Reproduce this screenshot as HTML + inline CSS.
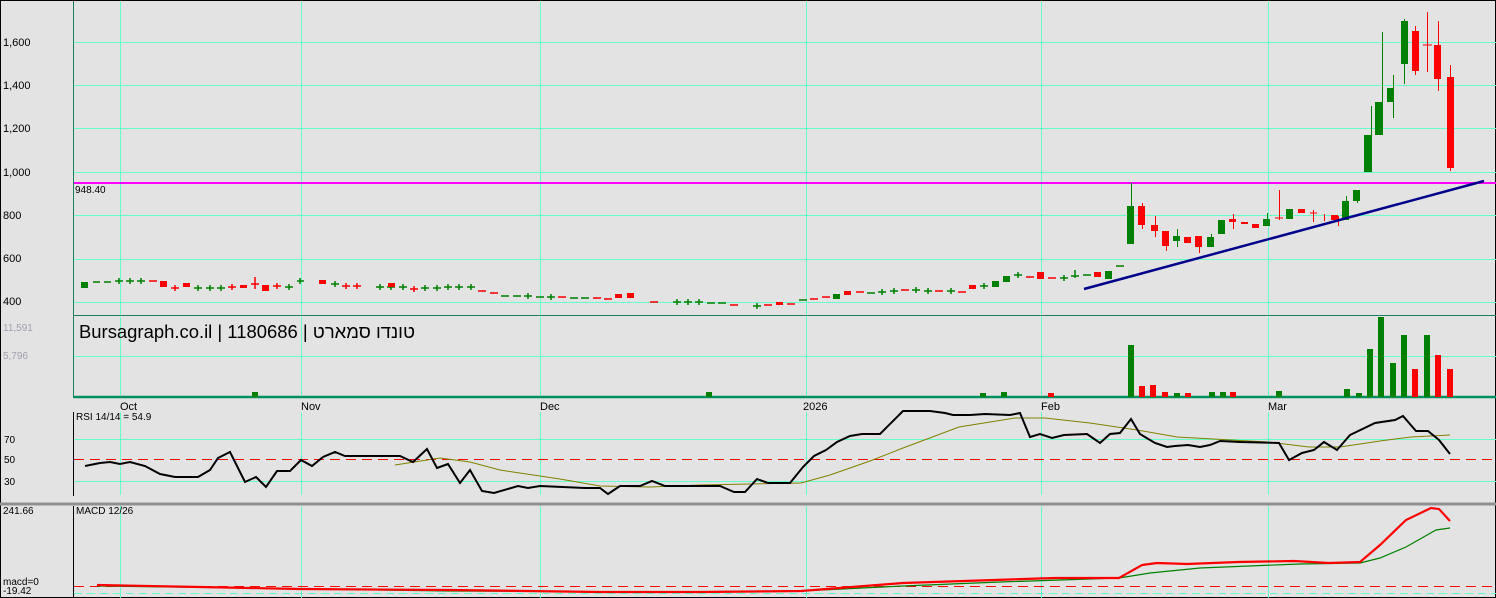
<!DOCTYPE html>
<html><head><meta charset="utf-8"><style>
body{margin:0;background:#e3e3e3;width:1496px;height:598px;overflow:hidden}
svg{display:block}
text{font-family:"Liberation Sans","Noto Sans CJK SC",sans-serif;font-size:11px;fill:#000}
</style></head><body>
<svg width="1496" height="598" viewBox="0 0 1496 598" xmlns="http://www.w3.org/2000/svg">
<rect x="0" y="0" width="1496" height="598" fill="#e3e3e3"/>
<rect x="0.5" y="0.5" width="1495" height="597" fill="none" stroke="#000"/>
<g stroke="#66ffcc" stroke-width="1" fill="none">
<path d="M74 42.5H1496M74 85.5H1496M74 128.5H1496M74 172.5H1496M74 215.5H1496M74 259.5H1496M74 302.5H1496"/>
<path d="M74 356.5H1496M74 439.5H1496M74 481.5H1496"/>
<path d="M120.5 1V315M301.5 1V315M540.5 1V315M806.5 1V315M1041.5 1V315M1268.5 1V315"/>
<path d="M120.5 316V396M301.5 316V396M540.5 316V396M806.5 316V396M1041.5 316V396M1268.5 316V396"/>
<path d="M120.5 412V495M301.5 412V495M540.5 412V495M806.5 412V495M1041.5 412V495M1268.5 412V495"/>
<path d="M120.5 506V598M301.5 506V598M540.5 506V598M806.5 506V598M1041.5 506V598M1268.5 506V598"/>
<path d="M74 593.5H1496" stroke-dasharray="8 5"/>
</g>
<path d="M73.5 1V398" stroke="#1a8060" stroke-width="1"/>
<path d="M74 315.5H1496" stroke="#1a8060"/>
<path d="M74 397H1496" stroke="#009060" stroke-width="2.5"/>
<path d="M73.5 412V496M73.5 506V598" stroke="#000"/>
<path d="M0 504H1496" stroke="#909090" stroke-width="3"/>
<path d="M74 459.5H1496M74 586.5H1496" stroke="#ff0000" stroke-dasharray="10 6"/>
<path d="M74 183H1496" stroke="#ff00ff" stroke-width="2"/>
<text x="3" y="46">1,600</text><text x="3" y="89">1,400</text><text x="3" y="132">1,200</text><text x="3" y="176">1,000</text>
<text x="3" y="219">800</text><text x="3" y="262">600</text><text x="3" y="305">400</text>
<text x="75" y="193" style="font-size:10px">948.40</text>
<text x="3" y="331" style="font-size:10px;fill:#a0a0b0">11,591</text>
<text x="3" y="359" style="font-size:10px;fill:#a0a0b0">5,796</text>
<text x="79" y="338" style="font-size:18.5px" textLength="336" lengthAdjust="spacingAndGlyphs">Bursagraph.co.il | 1180686 | טונדו סמארט</text>
<text x="120" y="410">Oct</text><text x="301" y="410">Nov</text><text x="540" y="410">Dec</text><text x="803" y="410">2026</text><text x="1041" y="410">Feb</text><text x="1268" y="410">Mar</text>
<text x="76" y="420" style="font-size:10px">RSI 14/14 = 54.9</text>
<text x="4" y="443" style="font-size:10px">70</text><text x="4" y="463" style="font-size:10px">50</text><text x="4" y="485" style="font-size:10px">30</text>
<text x="3" y="514" style="font-size:10px">241.66</text>
<text x="76" y="514" style="font-size:10px">MACD 12/26</text>
<text x="3" y="585" style="font-size:10px">macd=0</text><text x="3" y="594" style="font-size:10px">-19.42</text>
<g stroke-width="1.5" fill="none">
<path stroke="#008000" d="M93 282h7M104 282h7M115 281h8M119 278v6M126 281h8M130 278v6M137 281h8M141 278v6M194 288h8M198 285v6M206 288h8M210 285v6M217 288h8M221 285v6M285 287h8M289 284v6M297 281h7M300 278v6M331 284h8M335 281v6M376 287h8M380 284v6M387 287h8M391 284v6M399 287h8M403 284v6M421 288h8M425 285v6M433 288h8M437 285v6M444 287h8M448 284v6M455 287h8M459 284v6M467 287h8M471 284v6M501 296h8M513 296h8M524 296h8M528 293v6M536 297h8M547 297h8M551 294v6M570 298h8M581 298h8M673 302h8M677 299v6M684 302h8M688 299v6M695 302h8M699 299v6M707 303h8M718 303h8M753 306h8M757 303v6M799 300h8M867 293h8M878 292h8M882 289v6M890 291h8M894 288v6M912 290h8M916 287v6M924 291h8M928 288v6M947 291h8M951 288v6M980 286h8M984 283v6M1014 275h8M1018 272v6M1060 278h8M1064 275v6M1071 276h8M1075 270v8M1083 275h8M1116 266h8"/>
<path stroke="#ff0000" d="M149 281h8M171 288h8M175 285v6M228 287h8M232 284v6M251 284h8M255 277v12M273 286h8M277 283v6M342 286h8M346 283v6M353 286h8M357 283v6M410 289h8M414 286v6M478 291h8M490 293h8M558 297h8M593 298h8M604 299h8M650 302h8M730 305h8M764 305h8M787 304h8M810 299h8M822 297h8M856 292h8M901 290h8M935 291h8M958 292h8M1026 277h8M1048 278h8"/>
</g>
<g fill="#008000">
<rect x="81" y="282" width="7" height="6"/>
<rect x="833" y="294" width="7" height="5"/><rect x="992" y="281" width="7" height="6"/><rect x="1003" y="276" width="7" height="6"/><rect x="1105" y="271" width="7" height="8"/>
<rect x="1127" y="206" width="7" height="38"/><rect x="1173" y="236" width="7" height="5"/><rect x="1207" y="237" width="7" height="10"/><rect x="1218" y="220" width="7" height="14"/><rect x="1263" y="219" width="7" height="7"/><rect x="1286" y="209" width="7" height="10"/><rect x="1342" y="201" width="7" height="19"/><rect x="1353" y="190" width="7" height="11"/><rect x="1364" y="135" width="7" height="37"/><rect x="1375" y="102" width="7" height="33"/><rect x="1387" y="88" width="7" height="14"/><rect x="1401" y="21" width="7" height="43"/>
</g>
<g fill="#ff0000">
<rect x="160" y="281" width="7" height="6"/><rect x="183" y="283" width="7" height="4"/><rect x="240" y="285" width="7" height="3"/><rect x="262" y="285" width="7" height="6"/><rect x="319" y="280" width="7" height="4"/><rect x="388" y="283" width="7" height="4"/><rect x="615" y="294" width="7" height="4"/><rect x="627" y="293" width="7" height="5"/><rect x="776" y="302" width="7" height="3"/><rect x="844" y="291" width="7" height="4"/><rect x="969" y="285" width="7" height="4"/><rect x="1037" y="272" width="7" height="7"/><rect x="1094" y="272" width="7" height="5"/>
<rect x="1138" y="206" width="7" height="19"/><rect x="1151" y="225" width="7" height="6"/><rect x="1162" y="231" width="7" height="15"/><rect x="1184" y="237" width="7" height="6"/><rect x="1195" y="236" width="7" height="11"/><rect x="1229" y="219" width="7" height="3"/><rect x="1241" y="222" width="7" height="2"/><rect x="1252" y="224" width="7" height="4"/><rect x="1298" y="209" width="7" height="4"/><rect x="1331" y="215" width="7" height="5"/><rect x="1412" y="31" width="7" height="40"/><rect x="1434" y="45" width="7" height="34"/><rect x="1447" y="77" width="7" height="91"/>
</g>
<g stroke-width="1" fill="none">
<path stroke="#008000" d="M1131.5 183V244M1177.5 229V247M1211.5 234V247M1267.5 213V226M1346.5 196V220M1357.5 190V203M1371.5 106V172M1382.5 32V135M1393.5 75V118M1404.5 19V84"/>
<path stroke="#ff0000" d="M1142.5 203V229M1155.5 216V237M1166.5 231V251M1199.5 236V253M1233.5 214V229M1279.5 190V220M1275 218h8M1313.5 210V222M1310 213h7M1324.5 214V221M1338.5 216V226M1415.5 26V75M1427.5 12V72M1423 45h9M1438.5 21V91M1450.5 65V171"/>
</g>
<path d="M1084 289L1484 181" stroke="#00008b" stroke-width="2.5"/>
<g fill="#008000">
<rect x="252" y="392" width="6" height="5"/><rect x="706" y="392" width="6" height="5"/><rect x="980" y="393" width="6" height="4"/><rect x="1001" y="392" width="6" height="5"/><rect x="1128" y="345" width="6" height="52"/><rect x="1174" y="393" width="6" height="4"/><rect x="1209" y="392" width="6" height="5"/><rect x="1220" y="392" width="6" height="5"/><rect x="1276" y="391" width="6" height="6"/><rect x="1344" y="389" width="6" height="8"/><rect x="1356" y="393" width="6" height="4"/><rect x="1367" y="349" width="6" height="48"/><rect x="1378" y="317" width="6" height="80"/><rect x="1390" y="363" width="6" height="34"/><rect x="1401" y="335" width="6" height="62"/><rect x="1424" y="335" width="6" height="62"/>
</g>
<g fill="#ff0000">
<rect x="1048" y="393" width="6" height="4"/><rect x="1139" y="386" width="6" height="11"/><rect x="1150" y="385" width="6" height="12"/><rect x="1162" y="392" width="6" height="5"/><rect x="1185" y="393" width="6" height="4"/><rect x="1230" y="392" width="6" height="5"/><rect x="1412" y="369" width="6" height="28"/><rect x="1435" y="355" width="6" height="42"/><rect x="1447" y="369" width="6" height="28"/>
</g>
<polyline fill="none" stroke="#808000" stroke-width="1" points="395,465 440,458 470,462 500,470 560,479 600,486 650,487 700,485 750,484 801,483 830,475 870,461 903,448 959,427 1015,418 1045,418 1090,423 1137,430 1177,437 1268,442 1309,447 1340,447 1380,441 1411,437 1450,435"/>
<polyline fill="none" stroke="#000" stroke-width="2" points="85,466 100,463 110,462 120,464 130,462 145,466 160,474 175,477 198,477 210,470 218,458 230,452 245,482 256,477 266,487 277,471 290,471 301,460 312,466 323,457 335,452 345,456 355,456 400,456 413,462 427,449 437,468 448,464 460,483 470,470 482,491 494,493 518,486 528,488 540,486 585,488 600,488 608,494 620,486 640,486 652,481 665,486 700,486 720,486 734,492 745,492 757,479 768,483 790,483 803,467 814,456 826,450 837,442 850,436 862,434 880,434 903,411 930,411 945,413 953,415 970,415 985,414 1010,415 1020,413 1030,437 1040,434 1052,438 1064,435 1087,434 1100,443 1110,434 1120,433 1131,419 1140,434 1155,443 1167,447 1175,446 1188,445 1200,447 1210,445 1220,441 1240,442 1279,443 1289,460 1302,453 1314,450 1324,442 1337,450 1350,435 1375,423 1395,420 1403,416 1416,431 1428,431 1439,440 1450,454"/>
<polyline fill="none" stroke="#008000" stroke-width="1.2" points="97,586 250,588 450,591 650,592 801,591 903,586 1000,582 1119,578 1150,573 1200,568 1300,564 1360,563 1380,558 1406,547 1436,530 1450,528"/>
<polyline fill="none" stroke="#ff0000" stroke-width="2.2" points="97,585 200,587 300,589 450,590 600,592 700,592 801,591 903,583 1055,578 1119,578 1142,565 1157,563 1187,564 1238,562 1294,561 1329,563 1360,562 1380,545 1406,520 1431,508 1439,509 1450,521"/>
</svg>
</body></html>
